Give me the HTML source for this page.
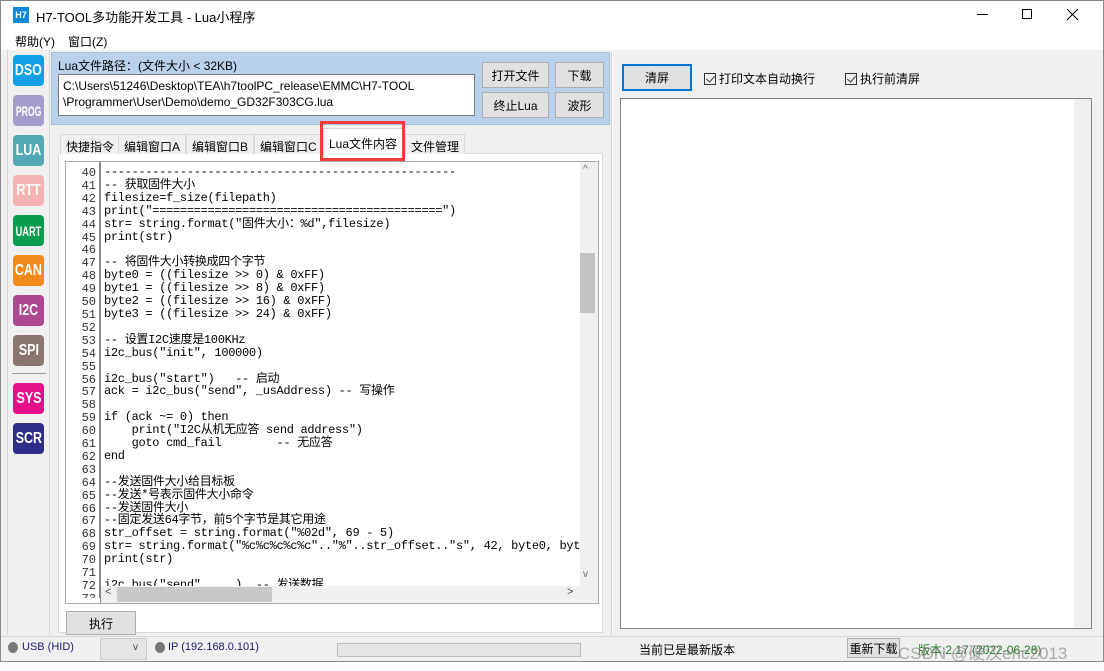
<!DOCTYPE html>
<html><head><meta charset="utf-8"><style>
*{box-sizing:border-box;margin:0;padding:0}
body{width:1104px;height:671px;background:#fff;position:relative;overflow:hidden;font-family:"Liberation Sans","Noto Sans CJK SC",sans-serif;font-size:12px;color:#000}
.a{position:absolute}
.btn{position:absolute;background:#e1e1e1;border:1px solid #adadad;display:flex;align-items:center;justify-content:center;font-size:12px}
.ic{position:absolute;left:13px;width:31px;height:31px;border-radius:4px;color:#fff;font-weight:bold;display:flex;align-items:center;justify-content:center;font-size:16px}
.ic span{display:inline-block;transform:scaleX(0.78);white-space:nowrap}
.tab{position:absolute;top:134px;height:20px;background:#f0f0f0;border:1px solid #d9d9d9;border-bottom:none;font-size:12px;padding:3px 5px 0}
.code{position:absolute;left:2px;top:4px;font-family:"Liberation Mono","Noto Sans CJK SC",monospace;font-size:12px;line-height:12.9px;white-space:pre;letter-spacing:-0.3px}
.num{position:absolute;left:66px;width:30px;top:167px;font-family:"Liberation Mono",monospace;font-size:12px;line-height:12.9px;text-align:right;color:#333;white-space:pre}
.cb{display:inline-block;width:12px;height:12px;border:1px solid #333;vertical-align:-2px;margin-right:3px;position:relative}
.cb:after{content:"";position:absolute;left:3px;top:0px;width:4px;height:7px;border:solid #333;border-width:0 1.5px 1.5px 0;transform:rotate(40deg)}
</style></head><body>
<div class="a" style="left:0;top:0;width:1104px;height:662px;border:1px solid #888"></div>
<div class="a" style="left:13px;top:7px;width:16px;height:16px;background:#0c8ad8;color:#fff;font-size:9px;font-weight:bold;text-align:center;line-height:16px">H7</div>
<div class="a" style="left:36px;top:7px;font-size:13px">H7-TOOL多功能开发工具 - Lua小程序</div>
<div class="a" style="left:977px;top:14px;width:11px;height:1px;background:#000"></div>
<div class="a" style="left:1022px;top:9px;width:10px;height:10px;border:1px solid #000"></div>
<svg class="a" style="left:1067px;top:9px" width="11" height="11"><path d="M0 0L11 11M11 0L0 11" stroke="#000" stroke-width="1"/></svg>
<div class="a" style="left:15px;top:33px;font-size:12px">帮助(Y)</div>
<div class="a" style="left:68px;top:33px;font-size:12px">窗口(Z)</div>
<div class="a" style="left:1px;top:50px;width:1102px;height:611px;background:#f0f0f0"></div>
<div class="a" style="left:7px;top:50px;width:1px;height:585px;background:#d6d6d6"></div>
<div class="a" style="left:49px;top:50px;width:1px;height:585px;background:#d6d6d6"></div>
<div class="ic" style="top:55px;background:#11a0e6"><span>DSO</span></div>
<div class="ic" style="top:95px;background:#a59ccc;font-size:14px"><span style="transform:scaleX(0.62)">PROG</span></div>
<div class="ic" style="top:135px;background:#52a8b4"><span>LUA</span></div>
<div class="ic" style="top:175px;background:#f3b3b3"><span>RTT</span></div>
<div class="ic" style="top:215px;background:#089c4e;font-size:14px"><span style="transform:scaleX(0.66)">UART</span></div>
<div class="ic" style="top:255px;background:#f28a1c"><span>CAN</span></div>
<div class="ic" style="top:295px;background:#ad4890"><span>I2C</span></div>
<div class="ic" style="top:335px;background:#8a766e"><span>SPI</span></div>
<div class="a" style="left:12px;top:373px;width:34px;height:1px;background:#999"></div>
<div class="ic" style="top:383px;background:#e5118a"><span>SYS</span></div>
<div class="ic" style="top:423px;background:#2e2d8a"><span>SCR</span></div>
<div class="a" style="left:51px;top:52px;width:559px;height:73px;background:#b9d1ea;border:1px solid #a8c0dc"></div>
<div class="a" style="left:58px;top:57px;font-size:12px">Lua文件路径：(文件大小 &lt; 32KB)</div>
<div class="a" style="left:58px;top:74px;width:417px;height:42px;background:#fff;border:1px solid #7a7a7a;padding:3px 4px;font-size:12px;line-height:16px">C:\Users\51246\Desktop\TEA\h7toolPC_release\EMMC\H7-TOOL<br>\Programmer\User\Demo\demo_GD32F303CG.lua</div>
<div class="btn" style="left:482px;top:62px;width:67px;height:26px">打开文件</div>
<div class="btn" style="left:555px;top:62px;width:49px;height:26px">下载</div>
<div class="btn" style="left:482px;top:92px;width:67px;height:26px">终止Lua</div>
<div class="btn" style="left:555px;top:92px;width:49px;height:26px">波形</div>
<div class="a" style="left:58px;top:153px;width:545px;height:480px;background:#fff;border:1px solid #d9d9d9"></div>
<div class="tab" style="left:60px">快捷指令</div>
<div class="tab" style="left:118px">编辑窗口A</div>
<div class="tab" style="left:186px">编辑窗口B</div>
<div class="tab" style="left:254px">编辑窗口C</div>
<div class="tab" style="left:323px;top:128px;height:27px;background:#fff;padding-top:6px">Lua文件内容</div>
<div class="tab" style="left:405px">文件管理</div>
<div class="a" style="left:320px;top:121px;width:85px;height:40px;border:3px solid #f23a3a"></div>
<div class="a" style="left:65px;top:161px;width:534px;height:443px;border:1px solid #aaa;background:#fff"></div>
<div class="a" style="left:99px;top:162px;width:2px;height:441px;border-left:1px solid #888;border-right:1px solid #888"></div>
<div class="num">40
41
42
43
44
45
46
47
48
49
50
51
52
53
54
55
56
57
58
59
60
61
62
63
64
65
66
67
68
69
70
71
72
73</div>
<div class="a" style="left:102px;top:162px;width:478px;height:424px;overflow:hidden">
<div class="code">---------------------------------------------------
-- 获取固件大小
filesize=f_size(filepath)
print("==========================================")
str= string.format("固件大小：%d",filesize)
print(str)

-- 将固件大小转换成四个字节
byte0 = ((filesize &gt;&gt; 0) &amp; 0xFF)
byte1 = ((filesize &gt;&gt; 8) &amp; 0xFF)
byte2 = ((filesize &gt;&gt; 16) &amp; 0xFF)
byte3 = ((filesize &gt;&gt; 24) &amp; 0xFF)

-- 设置I2C速度是100KHz
i2c_bus("init", 100000)

i2c_bus("start")   -- 启动
ack = i2c_bus("send", _usAddress) -- 写操作

if (ack ~= 0) then
    print("I2C从机无应答 send address")
    goto cmd_fail        -- 无应答
end

--发送固件大小给目标板
--发送*号表示固件大小命令
--发送固件大小
--固定发送64字节，前5个字节是其它用途
str_offset = string.format("%02d", 69 - 5)
str= string.format("%c%c%c%c%c".."%"..str_offset.."s", 42, byte0, byte1
print(str)

i2c_bus("send", ...)  -- 发送数据</div></div>
<div class="a" style="left:66px;top:598px;width:34px;height:5px;background:#fff"></div>
<div class="a" style="left:580px;top:162px;width:18px;height:424px;background:#f0f0f0"></div>
<div class="a" style="left:580px;top:253px;width:15px;height:60px;background:#c2c2c2"></div>
<div class="a" style="left:583px;top:164px;font-size:10px;color:#666">^</div>
<div class="a" style="left:583px;top:569px;font-size:10px;color:#666">v</div>
<div class="a" style="left:101px;top:586px;width:497px;height:17px;background:#f0f0f0"></div>
<div class="a" style="left:117px;top:587px;width:155px;height:15px;background:#c8c8c8"></div>
<div class="a" style="left:105px;top:586px;font-size:11px;color:#444">&lt;</div>
<div class="a" style="left:567px;top:586px;font-size:11px;color:#444">&gt;</div>
<div class="btn" style="left:66px;top:611px;width:70px;height:24px">执行</div>
<div class="a" style="left:611px;top:52px;width:2px;height:583px;background:#fff;border-left:1px solid #ccc"></div>
<div class="btn" style="left:622px;top:64px;width:70px;height:27px;border:2px solid #0078d7">清屏</div>
<div class="a" style="left:704px;top:70px;font-size:12px"><span class="cb"></span>打印文本自动换行</div>
<div class="a" style="left:845px;top:70px;font-size:12px"><span class="cb"></span>执行前清屏</div>
<div class="a" style="left:620px;top:98px;width:472px;height:531px;background:#fff;border:1px solid #828282"></div>
<div class="a" style="left:1074px;top:99px;width:17px;height:529px;background:#f0f0f0"></div>
<div class="a" style="left:1px;top:636px;width:1102px;height:25px;background:#f0f0f0;border-top:1px solid #d6d6d6"></div>
<div class="a" style="left:8px;top:642px;width:10px;height:11px;border-radius:50%;background:#777"></div>
<div class="a" style="left:22px;top:641px;font-size:11px;color:#1a1a6a">USB (HID)</div>
<div class="a" style="left:100px;top:638px;width:47px;height:22px;background:#e5e5e5;border:1px solid #ccc"></div>
<div class="a" style="left:133px;top:642px;font-size:10px;color:#444">v</div>
<div class="a" style="left:155px;top:642px;width:10px;height:11px;border-radius:50%;background:#777"></div>
<div class="a" style="left:168px;top:641px;font-size:11px;color:#1a1a6a">IP (192.168.0.101)</div>
<div class="a" style="left:337px;top:643px;width:244px;height:14px;background:#e6e6e6;border:1px solid #bcbcbc"></div>
<div class="a" style="left:639px;top:641px;font-size:12px">当前已是最新版本</div>
<div class="btn" style="left:847px;top:638px;width:53px;height:20px">重新下载</div>
<div class="a" style="left:918px;top:641px;font-size:12px;color:#2a7a2a">版本:2.17 (2022-06-28)</div>
<div class="a" style="left:898px;top:639px;font-size:17px;color:rgba(120,120,120,0.6)">CSDN @硬汉eric2013</div>
</body></html>
